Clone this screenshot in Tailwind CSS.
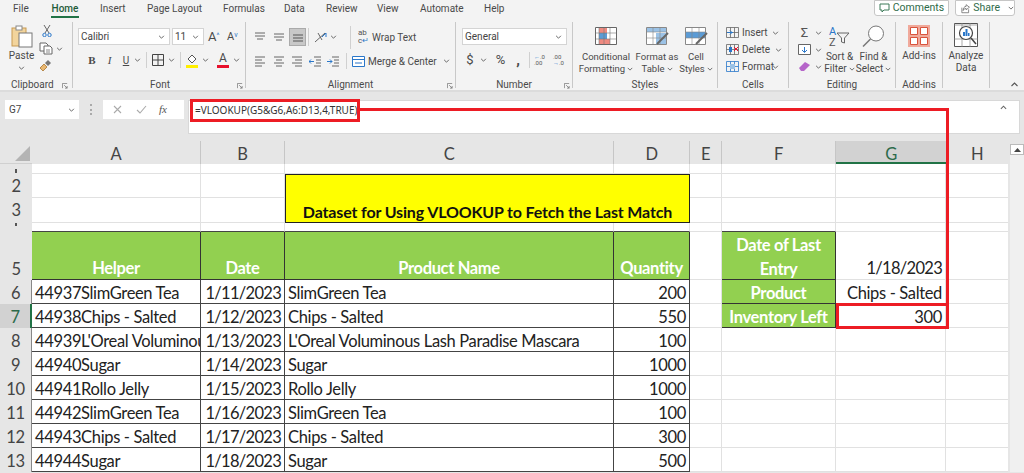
<!DOCTYPE html>
<html><head><meta charset="utf-8"><title>Excel</title>
<script src="https://cdn.jsdelivr.net/npm/@tailwindcss/browser@4"></script></head>
<body class="m-0 overflow-hidden">
<svg class="hidden"><defs>
<symbol id="ch" viewBox="0 0 8 5"><path d="M1 1l3 3 3-3" fill="none" stroke="#555" stroke-width="1.1"/></symbol>
<symbol id="la" viewBox="0 0 7 7"><path d="M.5 6V.5H6M2.5 2.5L6 6M6 3.5V6H3.5" fill="none" stroke="#777" stroke-width=".9"/></symbol>
</defs></svg>
<div class="relative w-[1024px] h-[473px] overflow-hidden bg-[#e6e6e6] font-['Roboto'] text-[10px] text-[#4a4a4a] whitespace-nowrap">

<!-- tabs -->
<div class="flex h-[18px] bg-[#f3f3f3] items-start">
  <div class="flex text-[10px] leading-[17px] pl-[13px] w-[874px]">
    <span class="w-[39px]">File</span>
    <span class="w-[28px] text-[#1f5c3a] font-medium border-b-2 border-[#217346] h-[18px] text-center -ml-[1px] mr-[21px]">Home</span>
    <span class="w-[47px]">Insert</span>
    <span class="w-[76px]">Page Layout</span>
    <span class="w-[61px]">Formulas</span>
    <span class="w-[42px]">Data</span>
    <span class="w-[51px]">Review</span>
    <span class="w-[43px]">View</span>
    <span class="w-[64px]">Automate</span>
    <span>Help</span>
  </div>
  <div class="flex items-center h-[16px] w-[75px] bg-white border border-[#c6c6c6] rounded-b-[3px] text-[#2f6b4a] justify-center gap-[3px] text-[10.500px]">
    <svg width="11" height="10" viewBox="0 0 11 10"><path d="M1 1h9v6H5L3 9V7H1z" fill="none" stroke="#3d7a58"/></svg>Comments</div>
  <div class="flex items-center h-[16px] w-[60px] ml-[6px] bg-white border border-[#c6c6c6] rounded-b-[3px] text-[#2f6b4a] pl-[5px] gap-[3px] text-[10.500px]">
    <svg width="11" height="11" viewBox="0 0 11 11"><path d="M1 4.500v6h8v-4M6 1l4 3-4 3V5.500C4 5.500 3 6.500 2.500 8 2.500 5 4 3 6 3z" fill="none" stroke="#666" stroke-width=".9"/></svg>Share<svg class="ml-[5px]" width="7" height="4"><use href="#ch"/></svg></div>
</div>

<!-- ribbon -->
<div class="relative flex items-start h-[74px] pt-[4px] bg-[#f3f3f3] border-b-2 border-[#dcdcdc]">

  <!-- Clipboard -->
  <div class="w-[73px] h-[66px] border-r border-[#c8c8c8] shrink-0">
    <div class="flex h-[56px]">
      <div class="w-[38px] flex flex-col items-center pl-[5px]">
        <svg class="mt-[3px]" width="22" height="23" viewBox="0 0 22 23"><rect x="1" y="3" width="14" height="18" fill="#f2d49c" stroke="#c79a52"/><rect x="5" y="1" width="6" height="4" fill="#fff" stroke="#888"/><rect x="8" y="8" width="13" height="14" fill="#fff" stroke="#777"/></svg>
        <span class="mt-[2px] leading-[12px]">Paste</span>
        <svg class="mt-[4px]" width="7" height="4"><use href="#ch"/></svg>
      </div>
      <div class="flex flex-col pl-[1px]">
        <svg class="mt-[3px] ml-[3px]" width="10" height="12" viewBox="0 0 10 12"><path d="M2 0l5 8M8 0L3 8" stroke="#666" fill="none"/><circle cx="2.500" cy="10" r="1.700" fill="none" stroke="#2a77c9"/><circle cx="7.500" cy="10" r="1.700" fill="none" stroke="#2a77c9"/></svg>
        <div class="flex items-center mt-[5px]"><svg width="14" height="13" viewBox="0 0 14 13"><path d="M1 1h6l2 2v6H1z" fill="#fff" stroke="#666"/><path d="M5 4h6l2 2v6H5z" fill="#fff" stroke="#666"/><path d="M7 8h4M7 10h4" stroke="#888"/></svg><svg class="ml-[3px]" width="7" height="4"><use href="#ch"/></svg></div>
        <svg class="mt-[4px]" width="13" height="13" viewBox="0 0 13 13"><path d="M1 9l4-4 3 3-4 4z" fill="#e9b872" stroke="#b8894a"/><path d="M6 4l3-3 3 3-3 3z" fill="#777"/></svg>
      </div>
    </div>
    <div class="flex justify-between h-[14px] leading-[14px] pl-[11px] pr-[4px]"><span>Clipboard</span><svg class="mt-[5px]" width="6" height="6"><use href="#la"/></svg></div>
  </div>

  <!-- Font -->
  <div class="w-[173px] h-[66px] border-r border-[#c8c8c8] shrink-0">
    <div class="h-[56px]">
      <div class="flex items-center pl-[5px] pt-[6px] h-[23px]">
        <div class="flex items-center justify-between w-[92px] h-[17px] bg-white border border-[#d4d4d4] px-[2px] pr-[4px] text-[#444]">Calibri<svg width="7" height="4"><use href="#ch"/></svg></div>
        <div class="flex items-center justify-between ml-[2px] w-[32px] h-[17px] bg-white border border-[#d4d4d4] px-[2px] pr-[4px] text-[#444]">11<svg width="7" height="4"><use href="#ch"/></svg></div>
        <span class="ml-[4px] text-[13px] leading-[17px] w-[15px]">A<sup class="text-[7px] text-[#2a77c9]">^</sup></span>
        <span class="ml-[4px] text-[11px] leading-[17px] w-[14px]">A<sup class="text-[7px] text-[#2a77c9]">v</sup></span>
      </div>
      <div class="flex items-center h-[16px] mt-[7px] pl-[10px]">
        <span class="w-[18px] text-center font-bold font-['Liberation_Serif'] text-[11px]">B</span>
        <span class="w-[17px] text-center italic font-['Liberation_Serif'] text-[11px]">I</span>
        <span class="w-[16px] text-center underline text-[10px]">U</span>
        <svg width="7" height="4"><use href="#ch"/></svg>
        <span class="ml-[5px] w-[1px] h-[16px] bg-[#d0d0d0]"></span>
        <svg class="ml-[5px]" width="12" height="12" viewBox="0 0 12 12"><path d="M.5.500h11v11H.5zM6 .500v11M.5 6h11" fill="none" stroke="#444"/></svg>
        <svg class="ml-[4px]" width="7" height="4"><use href="#ch"/></svg>
        <span class="ml-[5px] w-[1px] h-[16px] bg-[#d0d0d0]"></span>
        <svg class="ml-[5px]" width="12" height="15" viewBox="0 0 12 15"><path d="M2 6l4-4 4 4-4 4z" fill="#fff" stroke="#555"/><path d="M0 12h12v3H0z" fill="#ffef00"/></svg>
        <svg class="ml-[4px]" width="7" height="4"><use href="#ch"/></svg>
        <div class="ml-[8px] w-[12px] h-[15px] flex flex-col items-center leading-[11px] text-[12px]">A<span class="w-[12px] h-[3px] bg-[#e8112d] mt-[1px]"></span></div>
        <svg class="ml-[4px]" width="7" height="4"><use href="#ch"/></svg>
      </div>
    </div>
    <div class="relative h-[14px] leading-[14px] text-center pl-[2px]">Font<svg class="absolute right-[2px] top-[5px]" width="6" height="6"><use href="#la"/></svg></div>
  </div>

  <!-- Alignment -->
  <div class="w-[210px] h-[66px] border-r border-[#c8c8c8] shrink-0">
    <div class="h-[56px] pt-[6px]">
      <div class="flex items-center h-[18px] pl-[8px]">
        <svg width="12" height="10" viewBox="0 0 12 10"><path d="M1 1h10M1 4h10M3 7h6" stroke="#666"/></svg>
        <svg class="ml-[7px]" width="12" height="10" viewBox="0 0 12 10"><path d="M1 2h10M1 5h10M3 8h6" stroke="#666"/></svg>
        <span class="flex items-center justify-center ml-[4px] w-[17px] h-[18px] bg-[#c8c8c8] border border-[#aaa]"><svg width="12" height="10" viewBox="0 0 12 10"><path d="M1 3h10M1 6h10M1 9h10" stroke="#555"/></svg></span>
        <span class="ml-[2px] w-[1px] h-[18px] bg-[#d0d0d0]"></span>
        <svg class="ml-[5px]" width="14" height="13" viewBox="0 0 14 13"><path d="M1 11L11 2M4 2l4 7" stroke="#666" fill="none"/><path d="M8 6l4-4v4" stroke="#2a77c9" fill="none"/></svg>
        <svg class="ml-[2px]" width="7" height="4"><use href="#ch"/></svg>
        <span class="ml-[13px] w-[1px] h-[23px] bg-[#d0d0d0]"></span>
        <span class="ml-[7px] text-[8px] leading-[8px] w-[13px] text-[#555]">ab<br>c<span class="text-[#2a77c9]">↵</span></span>
        <span class="ml-[1px] text-[10px]">Wrap Text</span>
      </div>
      <div class="flex items-center h-[16px] mt-[7px] pl-[8px]">
        <svg width="12" height="11" viewBox="0 0 12 11"><path d="M1 1h10M1 4h7M1 7h10M1 10h7" stroke="#666"/></svg>
        <svg class="ml-[7px]" width="12" height="11" viewBox="0 0 12 11"><path d="M1 1h10M3 4h6M1 7h10M3 10h6" stroke="#666"/></svg>
        <svg class="ml-[6px]" width="12" height="11" viewBox="0 0 12 11"><path d="M1 1h10M4 4h7M1 7h10M4 10h7" stroke="#666"/></svg>
        <svg class="ml-[6px]" width="12" height="11" viewBox="0 0 12 11"><path d="M5 1h7M5 10h7M7 4h5M7 7h5" stroke="#666"/><path d="M5 5.500H0M2 3.500l-2 2 2 2" stroke="#2a77c9" fill="none"/></svg>
        <svg class="ml-[6px]" width="12" height="11" viewBox="0 0 12 11"><path d="M5 1h7M5 10h7M7 4h5M7 7h5" stroke="#666"/><path d="M0 5.500h5M3 3.500l2 2-2 2" stroke="#2a77c9" fill="none"/></svg>
        <span class="ml-[7px] w-[1px] h-[16px] bg-[#d0d0d0]"></span>
        <svg class="ml-[5px]" width="13" height="11" viewBox="0 0 13 11"><path d="M.5.500h12v10H.5z" fill="#fff" stroke="#2a77c9"/><path d="M.5 3.500h12M3 7h7" stroke="#2a77c9"/></svg>
        <span class="ml-[3px] text-[10px]">Merge &amp; Center</span>
        <svg class="ml-[6px]" width="7" height="4"><use href="#ch"/></svg>
      </div>
    </div>
    <div class="relative h-[14px] leading-[14px] text-center">Alignment<svg class="absolute right-[2px] top-[5px]" width="6" height="6"><use href="#la"/></svg></div>
  </div>

  <!-- Number -->
  <div class="w-[117px] h-[66px] border-r border-[#c8c8c8] shrink-0">
    <div class="h-[56px]">
      <div class="pl-[6px] pt-[6px] h-[23px]">
        <div class="flex items-center justify-between w-[105px] h-[17px] bg-white border border-[#d4d4d4] pl-[2px] pr-[4px] text-[#444]">General<svg width="7" height="4"><use href="#ch"/></svg></div>
      </div>
      <div class="flex items-center h-[16px] mt-[7px] pl-[9px]">
        <span class="w-[10px] text-center text-[13px]">$</span>
        <svg class="ml-[5px]" width="7" height="4"><use href="#ch"/></svg>
        <span class="ml-[6px] w-[15px] text-center text-[13px]">%</span>
        <span class="ml-[5px] w-[10px] text-center text-[15px] font-bold leading-[10px]">,</span>
        <span class="ml-[6px] w-[1px] h-[16px] bg-[#d0d0d0]"></span>
        <span class="ml-[4px] w-[14px] text-[6px] leading-[6px] text-[#555]"><span class="text-[#2a77c9]">←</span>.0<br>.00</span>
        <span class="ml-[5px] w-[14px] text-[6px] leading-[6px] text-[#555]">.00<br><span class="text-[#2a77c9]">→</span>.0</span>
      </div>
    </div>
    <div class="relative h-[14px] leading-[14px] text-center">Number<svg class="absolute right-[2px] top-[5px]" width="6" height="6"><use href="#la"/></svg></div>
  </div>

  <!-- Styles -->
  <div class="w-[145px] h-[66px] border-r border-[#c8c8c8] shrink-0">
    <div class="flex h-[56px] leading-[12px] text-center text-[9.500px]">
      <div class="w-[66px] flex flex-col items-center">
        <svg class="mt-[5px] mb-[6px]" width="22" height="18" viewBox="0 0 22 18"><path d="M.5.500h21v17H.5z" fill="#fff" stroke="#666"/><path d="M4 1h8v5H4zM4 12h11v5H4z" fill="#ef8a80"/><path d="M4 6h8v6H4z" fill="#5b9bd5"/><path d="M4 .500v17M9 .500v17M15 .500v17M.5 6h21M.5 12h21" stroke="#777" stroke-width=".6" fill="none"/></svg>
        <span>Conditional</span><span class="flex items-center gap-[2px]">Formatting<svg width="6" height="4"><use href="#ch"/></svg></span>
      </div>
      <div class="w-[36px] flex flex-col items-center">
        <svg class="mt-[5px] mb-[6px] shrink-0" width="23" height="18" viewBox="0 0 23 18"><path d="M.5.500h20v17H.5z" fill="#fff" stroke="#888"/><path d="M1 1h19v4H1z" fill="#9bc2e6"/><path d="M10 6h10v11H10z" fill="#9bc2e6"/><path d="M7 .500v17M14 .500v17M.5 5h20M.5 11h20" stroke="#888" stroke-width=".6" fill="none"/><path d="M11 17l11-11" stroke="#666" stroke-width="2"/></svg>
        <span>Format as</span><span class="flex items-center gap-[2px]">Table<svg width="6" height="4"><use href="#ch"/></svg></span>
      </div>
      <div class="w-[42px] flex flex-col items-center">
        <svg class="mt-[5px] mb-[6px]" width="23" height="18" viewBox="0 0 23 18"><path d="M.5.500h20v17H.5z" fill="#fff" stroke="#888"/><path d="M1 5h19v6H1z" fill="#5b9bd5"/><path d="M7 .500v17M14 .500v17M.5 5h20M.5 11h20" stroke="#888" stroke-width=".6" fill="none"/><path d="M11 17l11-11" stroke="#666" stroke-width="2"/></svg>
        <span>Cell</span><span class="flex items-center gap-[2px]">Styles<svg width="6" height="4"><use href="#ch"/></svg></span>
      </div>
    </div>
    <div class="h-[14px] leading-[14px] text-center">Styles</div>
  </div>

  <!-- Cells -->
  <div class="w-[71px] h-[66px] border-r border-[#c8c8c8] shrink-0">
    <div class="h-[56px] pl-[8px] pt-[2px] leading-[17px]">
      <div class="flex items-center h-[17px]"><svg width="13" height="11" viewBox="0 0 13 11"><path d="M.5.500h12v10H.5zM4.500.500v10M8.500.500v10M.5 5.500h12" fill="none" stroke="#666" stroke-width=".8"/><path d="M1 5.500h6M4 3.500l2 2-2 2" stroke="#2a77c9" fill="none"/></svg><span class="ml-[3px] w-[26px]">Insert</span><svg class="ml-[4px]" width="7" height="4"><use href="#ch"/></svg></div>
      <div class="flex items-center h-[17px]"><svg width="13" height="11" viewBox="0 0 13 11"><path d="M.5.500h12v10H.5zM4.500.500v10M8.500.500v10M.5 5.500h12" fill="none" stroke="#666" stroke-width=".8"/><path d="M3 3h3v5H3z" fill="#2a77c9"/><path d="M8 3l4 4M12 3l-4 4" stroke="#e8112d"/></svg><span class="ml-[3px] w-[28px]">Delete</span><svg class="ml-[5px]" width="7" height="4"><use href="#ch"/></svg></div>
      <div class="flex items-center h-[17px]"><svg width="13" height="11" viewBox="0 0 13 11"><path d="M.5.500h12v10H.5zM4.500.500v10M8.500.500v10M.5 5.500h12" fill="none" stroke="#2a77c9" stroke-width=".8"/><path d="M4 3h5v5H4z" fill="#9bc2e6"/></svg><span class="ml-[3px] w-[31px]">Format</span><svg class="-ml-[1px]" width="7" height="4"><use href="#ch"/></svg></div>
    </div>
    <div class="h-[14px] leading-[14px] text-center">Cells</div>
  </div>

  <!-- Editing -->
  <div class="w-[107px] h-[66px] border-r border-[#c8c8c8] shrink-0">
    <div class="flex h-[56px] leading-[12px] text-center">
      <div class="w-[33px] pl-[9px] pt-[2px]">
        <div class="flex items-center h-[17px]"><span class="w-[13px] text-[13px] leading-[17px] text-[#555]">Σ</span><svg class="ml-[4px]" width="7" height="4"><use href="#ch"/></svg></div>
        <div class="flex items-center h-[17px]"><svg width="13" height="11" viewBox="0 0 13 11"><path d="M.5.500h12v10H.5z" fill="#fff" stroke="#666"/><path d="M6.500 3v5M4 6l2.500 2.500L9 6" stroke="#2a77c9" fill="none"/></svg><svg class="ml-[4px]" width="7" height="4"><use href="#ch"/></svg></div>
        <div class="flex items-center h-[17px]"><svg width="13" height="11" viewBox="0 0 13 11"><path d="M1 7l6-6 5 3-6 6H3z" fill="#b565c9"/></svg><svg class="ml-[4px]" width="7" height="4"><use href="#ch"/></svg></div>
      </div>
      <div class="w-[35px] flex flex-col items-center">
        <div class="h-[24px] mt-[4px] mb-[1px] flex items-start text-[11px] leading-[11px] text-left"><span class="text-[#2a77c9]">A<br><span class="text-[#555]">Z</span></span><svg class="mt-[6px]" width="14" height="12" viewBox="0 0 14 12"><path d="M1 1h12L8.500 6v5l-3-1V6z" fill="none" stroke="#666"/></svg></div>
        <span>Sort &amp;</span><span class="flex items-center gap-[2px]">Filter<svg width="6" height="4"><use href="#ch"/></svg></span>
      </div>
      <div class="w-[33px] flex flex-col items-center">
        <svg class="mt-[3px] mb-[4px]" width="23" height="22" viewBox="0 0 23 22"><circle cx="14" cy="8.500" r="7.500" fill="#fff" stroke="#777"/><path d="M8.500 14L1 21.500" stroke="#777" stroke-width="1.500"/></svg>
        <span>Find &amp;</span><span class="flex items-center gap-[2px]">Select<svg width="6" height="4"><use href="#ch"/></svg></span>
      </div>
    </div>
    <div class="h-[14px] leading-[14px] text-center">Editing</div>
  </div>

  <!-- Add-ins -->
  <div class="w-[47px] h-[66px] border-r border-[#c8c8c8] shrink-0">
    <div class="h-[56px] flex flex-col items-center leading-[12px]">
      <svg class="mt-[3px] mb-[3px]" width="22" height="22" viewBox="0 0 22 22"><path d="M0 0h22v22H0z" fill="#f0a99b"/><path d="M2.500 2.500h7v7h-7zM12.500 2.500h7v7h-7zM2.500 12.500h7v7h-7zM12.500 12.500h7v7h-7z" fill="#fff" stroke="#d9533c"/></svg>
      <span>Add-ins</span>
    </div>
    <div class="h-[14px] leading-[14px] text-center">Add-ins</div>
  </div>

  <!-- Analyze -->
  <div class="w-[47px] h-[66px] border-r border-[#c8c8c8] shrink-0">
    <div class="h-[56px] flex flex-col items-center leading-[12px] text-center">
      <svg class="mt-[1px] mb-[3px]" width="24" height="24" viewBox="0 0 24 24"><path d="M.5.500h23v23H.5z" fill="#fff" stroke="#555"/><path d="M0 2h24M8 0v24M16 0v24M0 16h24" stroke="#888" stroke-width=".7"/><circle cx="12" cy="10" r="6.500" fill="#fff" stroke="#444" stroke-width="1.200"/><path d="M9 13V9h2v4zM11.500 13V6h2v7zM14 13v-3h1.500v3z" fill="#2a77c9"/><path d="M17 15l5 6" stroke="#444" stroke-width="1.500"/></svg>
      <span>Analyze</span><span>Data</span>
    </div>
  </div>
  <svg class="absolute left-[1010px] top-[64px]" width="9" height="5" viewBox="0 0 8 5"><path d="M1 4l3-3 3 3" fill="none" stroke="#555" stroke-width="1.100"/></svg>
</div>

<!-- formula bar -->
<div class="flex items-start h-[49px] pt-[8px] pl-[5px] pr-[4px]">
  <div class="flex items-center justify-between w-[74px] h-[19px] bg-white pl-[4px] pr-[4px] text-[#444] text-[10px]">G7<svg width="7" height="4"><use href="#ch"/></svg></div>
  <span class="ml-[11px] mt-[4px] w-[2px] h-[11px] border-l-2 border-dotted border-[#aaa]"></span>
  <div class="ml-[11px] flex items-center w-[81px] h-[19px] bg-white text-[#999]">
    <svg class="ml-[10px]" width="9" height="9" viewBox="0 0 9 9"><path d="M1 1l7 7M8 1L1 8" stroke="#aaa" stroke-width="1.100"/></svg>
    <svg class="ml-[14px]" width="11" height="9" viewBox="0 0 11 9"><path d="M1 5l3 3 6-7" fill="none" stroke="#aaa" stroke-width="1.100"/></svg>
    <span class="ml-[12px] italic font-['Liberation_Serif'] text-[11px] text-[#555]">fx</span>
  </div>
  <div class="ml-[4px] w-[832px] h-[34px] bg-white border border-[#d8d8d8] pl-[6px] pt-[1px] relative">
    <span class="block font-['Noto_Sans'] text-[10px] leading-[17px] text-[#333]">=VLOOKUP(G5&amp;G6,A6:D13,4,TRUE)</span>
    <svg class="absolute right-[12px] top-[4px]" width="7" height="5" viewBox="0 0 8 5"><path d="M1 4l3-3 3 3" fill="none" stroke="#666" stroke-width="1.200"/></svg>
  </div>
</div>

<!-- sheet -->
<div class="flex">
<div class="grid w-[1008px] shrink-0 grid-cols-[32px_169px_84px_329px_76px_32px_114px_110px_62px] grid-rows-[23px_10px_24px_25px_9px_48px_24px_24px_24px_24px_24px_24px_24px_24px] font-['Lato'] text-[16.500px] tracking-[-0.350px] leading-[26px] text-[#222] bg-white [&>div]:overflow-hidden">
  <!-- col headers -->
  <div class="relative bg-[#e6e6e6] border-b border-[#d0d0d0]"><svg class="absolute left-[15px] top-[5px]" width="15" height="15"><path d="M15 0v15H0z" fill="#b4b4b4"/></svg></div>
  <div class="bg-[#e6e6e6] border-r border-[#c6c6c6] text-center text-[#444]">A</div>
  <div class="bg-[#e6e6e6] border-r border-[#c6c6c6] text-center text-[#444]">B</div>
  <div class="bg-[#e6e6e6] border-r border-[#c6c6c6] text-center text-[#444]">C</div>
  <div class="bg-[#e6e6e6] border-r border-[#c6c6c6] text-center text-[#444]">D</div>
  <div class="bg-[#e6e6e6] border-r border-[#c6c6c6] text-center text-[#444]">E</div>
  <div class="bg-[#e6e6e6] border-r border-[#c6c6c6] text-center text-[#444]">F</div>
  <div class="bg-[#d2d2d2] border-b-2 border-[#217346] text-center text-[#2c6a4a]">G</div>
  <div class="bg-[#e6e6e6] text-center text-[#444]">H</div>

  <!-- row 1 -->
  <div class="bg-[#e6e6e6] flex justify-center items-end"><span class="w-[2px] h-[4px] bg-[#555] mb-[1px]"></span></div>
  <div class="border-r border-b border-[#e1e1e1]"></div><div class="border-r border-b border-[#e1e1e1]"></div><div class="border-r border-b border-[#e1e1e1]"></div><div class="border-r border-b border-[#e1e1e1]"></div><div class="border-r border-b border-[#e1e1e1]"></div><div class="border-r border-b border-[#e1e1e1]"></div><div class="border-r border-b border-[#e1e1e1]"></div><div class="border-b border-[#e1e1e1]"></div>
  <!-- row 2 -->
  <div class="bg-[#e6e6e6] text-center text-[#444] leading-[24px]">2</div>
  <div class="border-r border-b border-[#e1e1e1]"></div>
  <div class="border-r border-b border-[#e1e1e1]"></div>
  <div class="col-span-2 row-span-2 border border-[#222] bg-[#ffff00] flex items-end justify-center font-bold text-[16px] tracking-[-0.150px] leading-[20px] text-[#111]">Dataset for Using VLOOKUP to Fetch the Last Match</div>
  <div class="border-r border-b border-[#e1e1e1]"></div><div class="border-r border-b border-[#e1e1e1]"></div><div class="border-r border-b border-[#e1e1e1]"></div><div class="border-b border-[#e1e1e1]"></div>
  <!-- row 3 -->
  <div class="bg-[#e6e6e6] text-center text-[#444] leading-[24px]">3</div>
  <div class="border-r border-b border-[#e1e1e1]"></div>
  <div class="border-r border-b border-[#e1e1e1]"></div>
  <div class="border-r border-b border-[#e1e1e1]"></div><div class="border-r border-b border-[#e1e1e1]"></div><div class="border-r border-b border-[#e1e1e1]"></div><div class="border-b border-[#e1e1e1]"></div>
  <!-- row 4 -->
  <div class="bg-[#e6e6e6] flex justify-center"><span class="w-[2px] h-[3px] bg-[#555]"></span></div>
  <div class="border-r border-b border-r-[#e1e1e1] border-b-[#444]"></div><div class="border-r border-b border-r-[#e1e1e1] border-b-[#444]"></div><div class="border-r border-b border-r-[#e1e1e1] border-b-[#444]"></div><div class="border-r border-b border-r-[#e1e1e1] border-b-[#444]"></div>
  <div class="border-r border-b border-[#e1e1e1]"></div>
  <div class="border-r border-b border-r-[#e1e1e1] border-b-[#444]"></div>
  <div class="border-r border-b border-[#e1e1e1]"></div><div class="border-b border-[#e1e1e1]"></div>
  <!-- row 5 -->
  <div class="bg-[#e6e6e6] text-center text-[#444] flex items-end justify-center leading-[22px]">5</div>
  <div class="bg-[#92d050] border-r border-b border-[#333] flex items-end justify-center font-bold text-white leading-[22px]">Helper</div>
  <div class="bg-[#92d050] border-r border-b border-[#333] flex items-end justify-center font-bold text-white leading-[22px]">Date</div>
  <div class="bg-[#92d050] border-r border-b border-[#333] flex items-end justify-center font-bold text-white leading-[22px]">Product Name</div>
  <div class="bg-[#92d050] border-r border-b border-[#333] flex items-end justify-center font-bold text-white leading-[22px]">Quantity</div>
  <div class="border-r border-b border-[#e1e1e1]"></div>
  <div class="bg-[#92d050] border-r border-b border-[#333] flex items-center text-center font-bold text-white leading-[24px] pt-[2px]"><span class="w-full">Date of Last<br>Entry</span></div>
  <div class="border-r border-b border-[#e1e1e1] flex items-end justify-end pr-[3px] leading-[22px] tracking-[-0.700px]">1/18/2023</div>
  <div class="border-b border-[#e1e1e1]"></div>
  <!-- row 6 -->
  <div class="bg-[#e6e6e6] border-r border-[#888] text-center text-[#444]">6</div>
  <div class="border-r border-b border-[#444] pl-[3px]">44937SlimGreen Tea</div>
  <div class="border-r border-b border-[#444] text-right pr-[3px] tracking-[-0.700px]">1/11/2023</div>
  <div class="border-r border-b border-[#444] pl-[3px]">SlimGreen Tea</div>
  <div class="border-r border-b border-[#444] text-right pr-[3px]">200</div>
  <div class="border-r border-b border-[#e1e1e1]"></div>
  <div class="bg-[#92d050] border-r border-b border-[#333] text-center font-bold text-white">Product</div>
  <div class="border-r border-b border-[#e1e1e1] text-right pr-[3px]">Chips - Salted</div>
  <div class="border-b border-[#e1e1e1]"></div>
  <!-- row 7 -->
  <div class="bg-[#d2d2d2] border-r-2 border-[#217346] text-center text-[#2c6a4a]">7</div>
  <div class="border-r border-b border-[#444] pl-[3px]">44938Chips - Salted</div>
  <div class="border-r border-b border-[#444] text-right pr-[3px] tracking-[-0.700px]">1/12/2023</div>
  <div class="border-r border-b border-[#444] pl-[3px]">Chips - Salted</div>
  <div class="border-r border-b border-[#444] text-right pr-[3px]">550</div>
  <div class="border-r border-b border-[#e1e1e1]"></div>
  <div class="bg-[#92d050] border-r border-b border-[#333] text-center font-bold text-white">Inventory Left</div>
  <div class="border-r border-b border-[#e1e1e1] text-right pr-[3px]">300</div>
  <div class="border-b border-[#e1e1e1]"></div>
  <!-- row 8 -->
  <div class="bg-[#e6e6e6] border-r border-[#888] text-center text-[#444]">8</div>
  <div class="border-r border-b border-[#444] pl-[3px]">44939L'Oreal Voluminous Lash Paradise Mascara</div>
  <div class="border-r border-b border-[#444] text-right pr-[3px] tracking-[-0.700px]">1/13/2023</div>
  <div class="border-r border-b border-[#444] pl-[3px]">L'Oreal Voluminous Lash Paradise Mascara</div>
  <div class="border-r border-b border-[#444] text-right pr-[3px]">100</div>
  <div class="border-r border-b border-[#e1e1e1]"></div><div class="border-r border-b border-[#e1e1e1]"></div><div class="border-r border-b border-[#e1e1e1]"></div><div class="border-b border-[#e1e1e1]"></div>
  <!-- row 9 -->
  <div class="bg-[#e6e6e6] border-r border-[#888] text-center text-[#444]">9</div>
  <div class="border-r border-b border-[#444] pl-[3px]">44940Sugar</div>
  <div class="border-r border-b border-[#444] text-right pr-[3px] tracking-[-0.700px]">1/14/2023</div>
  <div class="border-r border-b border-[#444] pl-[3px]">Sugar</div>
  <div class="border-r border-b border-[#444] text-right pr-[3px]">1000</div>
  <div class="border-r border-b border-[#e1e1e1]"></div><div class="border-r border-b border-[#e1e1e1]"></div><div class="border-r border-b border-[#e1e1e1]"></div><div class="border-b border-[#e1e1e1]"></div>
  <!-- row 10 -->
  <div class="bg-[#e6e6e6] border-r border-[#888] text-center text-[#444]">10</div>
  <div class="border-r border-b border-[#444] pl-[3px]">44941Rollo Jelly</div>
  <div class="border-r border-b border-[#444] text-right pr-[3px] tracking-[-0.700px]">1/15/2023</div>
  <div class="border-r border-b border-[#444] pl-[3px]">Rollo Jelly</div>
  <div class="border-r border-b border-[#444] text-right pr-[3px]">1000</div>
  <div class="border-r border-b border-[#e1e1e1]"></div><div class="border-r border-b border-[#e1e1e1]"></div><div class="border-r border-b border-[#e1e1e1]"></div><div class="border-b border-[#e1e1e1]"></div>
  <!-- row 11 -->
  <div class="bg-[#e6e6e6] border-r border-[#888] text-center text-[#444]">11</div>
  <div class="border-r border-b border-[#444] pl-[3px]">44942SlimGreen Tea</div>
  <div class="border-r border-b border-[#444] text-right pr-[3px] tracking-[-0.700px]">1/16/2023</div>
  <div class="border-r border-b border-[#444] pl-[3px]">SlimGreen Tea</div>
  <div class="border-r border-b border-[#444] text-right pr-[3px]">100</div>
  <div class="border-r border-b border-[#e1e1e1]"></div><div class="border-r border-b border-[#e1e1e1]"></div><div class="border-r border-b border-[#e1e1e1]"></div><div class="border-b border-[#e1e1e1]"></div>
  <!-- row 12 -->
  <div class="bg-[#e6e6e6] border-r border-[#888] text-center text-[#444]">12</div>
  <div class="border-r border-b border-[#444] pl-[3px]">44943Chips - Salted</div>
  <div class="border-r border-b border-[#444] text-right pr-[3px] tracking-[-0.700px]">1/17/2023</div>
  <div class="border-r border-b border-[#444] pl-[3px]">Chips - Salted</div>
  <div class="border-r border-b border-[#444] text-right pr-[3px]">300</div>
  <div class="border-r border-b border-[#e1e1e1]"></div><div class="border-r border-b border-[#e1e1e1]"></div><div class="border-r border-b border-[#e1e1e1]"></div><div class="border-b border-[#e1e1e1]"></div>
  <!-- row 13 -->
  <div class="bg-[#e6e6e6] border-r border-[#888] text-center text-[#444]">13</div>
  <div class="border-r border-b border-[#444] pl-[3px]">44944Sugar</div>
  <div class="border-r border-b border-[#444] text-right pr-[3px] tracking-[-0.700px]">1/18/2023</div>
  <div class="border-r border-b border-[#444] pl-[3px]">Sugar</div>
  <div class="border-r border-b border-[#444] text-right pr-[3px]">500</div>
  <div class="border-r border-b border-[#e1e1e1]"></div><div class="border-r border-b border-[#e1e1e1]"></div><div class="border-r border-b border-[#e1e1e1]"></div><div class="border-b border-[#e1e1e1]"></div>
</div>
<!-- scrollbar -->
<div class="ml-[2px] w-[14px] flex flex-col">
  <div class="h-[3px]"></div>
  <div class="h-[11px] bg-white border border-[#bbb] flex items-center justify-center"><svg width="7" height="4"><path d="M0 4l3.500-4 3.500 4z" fill="#444"/></svg></div>
  <div class="flex-1 bg-[#f0f0f0]"></div>
</div>
</div>

<!-- red annotations -->
<div class="absolute left-[190px] top-[99px] w-[170px] h-[23px] border-[3px] border-[#ed1c24]"></div>
<div class="absolute left-[359px] top-[108px] w-[590px] h-[196px] border-t-[3px] border-r-[3px] border-[#ed1c24]"></div>
<div class="absolute left-[836px] top-[303px] w-[113px] h-[26px] border-[3px] border-[#ed1c24]"></div>
</div>
</body></html>
